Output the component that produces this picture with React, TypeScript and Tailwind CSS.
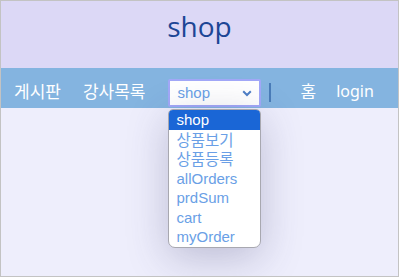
import React from "react";

const options = ["shop", "상품보기", "상품등록", "allOrders", "prdSum", "cart", "myOrder"];
const isKo = (s: string) => /[가-힣]/.test(s);

export default function App() {
  return (
    <div className="w-[399px] h-[277px] border border-[#c3c3c3] bg-[#eeeefc] overflow-hidden flex flex-col font-['Noto_Sans','Noto_Sans_CJK_KR',sans-serif]">
      <header className="h-[67px] bg-[#dcd8f6] flex justify-center pt-[5px]">
        <h1 className="text-[28px] leading-[40px] text-[#1c4695] font-['Open_Sans','Noto_Sans',sans-serif]">shop</h1>
      </header>
      <nav className="h-[40px] bg-[#84b4e0] flex items-center pl-[13px] text-white text-[16px]">
        <span className="mt-[6px] text-[17px] font-['Noto_Sans_CJK_KR',sans-serif]">게시판</span>
        <span className="ml-[22px] mt-[6px] text-[17px] font-['Noto_Sans_CJK_KR',sans-serif]">강사목록</span>
        <div className="relative ml-[23px] mt-[10px]">
          <div className="w-[93px] h-[28px] bg-white border-2 border-[#a2a8f8] rounded-[2px] flex items-center justify-between pl-[7px] pr-[6px] text-[#6a9fe6] text-[15px] font-['Liberation_Sans',Arial,sans-serif]">
            <span>shop</span>
            <svg width="10" height="7" viewBox="0 0 10 7" className="mr-[1px]">
              <path d="M1.2 1.2 L5 5 L8.8 1.2" stroke="#4f7fc6" strokeWidth="2" fill="none" />
            </svg>
          </div>
          <ul className="absolute left-0 top-[30px] w-[93px] bg-white rounded-b-[7px] rounded-t-[5px] border border-[#a8a8b0] shadow-[0_10px_40px_rgba(60,60,110,0.28)] overflow-hidden text-[15px] text-[#6a9fe6] z-10 font-['Liberation_Sans',Arial,'Noto_Sans_CJK_KR',sans-serif]">
            {options.map((o, i) => (
              <li
                key={o}
                className={
                  "h-[19.5px] leading-[19.5px] pl-[7px] flex items-center whitespace-nowrap " +
                  (i === 0 ? "bg-[#1a66d6] text-white " : "") +
                  (isKo(o) ? "text-[15.5px] font-['Noto_Sans_CJK_KR',sans-serif]" : "")
                }
              >
                {o}
              </li>
            ))}
          </ul>
        </div>
        <span className="ml-[8px] mt-[8px] w-[2px] h-[19px] bg-[#4a7cb8]"></span>
        <span className="ml-[29px] mt-[6px] text-[17px] font-['Noto_Sans_CJK_KR',sans-serif]">홈</span>
        <span className="ml-[20px] mt-[6px] text-[16px]">login</span>
      </nav>
      <main className="flex-1"></main>
    </div>
  );
}
